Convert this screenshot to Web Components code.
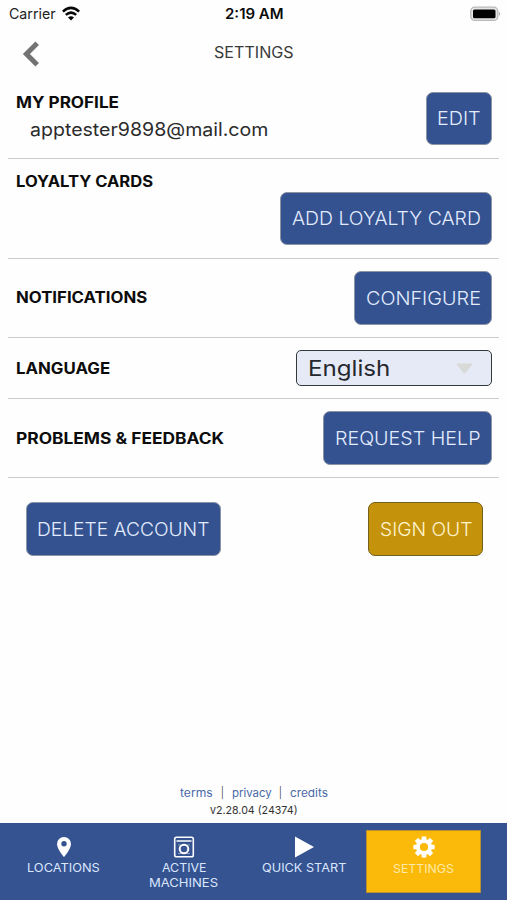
<!DOCTYPE html>
<html lang="en">
<head>
<meta charset="utf-8">
<title>Settings</title>
<style>
  body {
    margin: 0;
    background: #fefefe;
    font-family: Inter, "Open Sans", sans-serif;
    color: #0c0c0c;
  }
</style>
</head>
<body>
<settings-app></settings-app>

<script>
// Label whose glyphs are stretched to fill a given width
class FitText extends HTMLElement {
  constructor() {
    super();
    this.attachShadow({ mode: 'open' });
  }

  connectedCallback() {
    this.shadowRoot.innerHTML = `
      <style>
        :host { display: block; flex: none; text-align: left; white-space: nowrap; width: ${this.getAttribute('w')}px; }
        span { display: inline-block; transform-origin: 0 50%; }
      </style>
      <span><slot></slot></span>
    `;
    const span = this.shadowRoot.querySelector('span');
    const scale = Number(this.getAttribute('w')) / span.offsetWidth;
    span.style.transform = `scaleX(${scale})`;
  }
}
customElements.define('fit-text', FitText);

class StatusBar extends HTMLElement {
  constructor() {
    super();
    this.attachShadow({ mode: 'open' });
    this.shadowRoot.innerHTML = `
      <style>
        :host { display: grid; grid-template-columns: 1fr auto 1fr; align-items: center; height: 28px; padding: 0 6px 0 9px; box-sizing: border-box; font-size: 14.5px; line-height: 20px; }
        .left { display: flex; align-items: center; gap: 6px; color: #222; }
        .time { font-weight: 600; margin-right: 2px; }
        svg { display: block; }
        .left svg { margin-top: -2px; }
        .battery { justify-self: end; margin-top: -1px; }
      </style>
      <div class="left">
        <fit-text w="47">Carrier</fit-text>
        <svg width="18" height="15" viewBox="0 0 18 15" fill="none" stroke="#080808" stroke-width="2.6">
          <path d="M.9 5.6Q9-1.8 17.1 5.6M3.8 8.9Q9 4.3 14.2 8.9"/>
          <path d="M6 11.4Q9 9 12 11.4L9 14.4Z" fill="#080808" stroke="none"/>
        </svg>
      </div>
      <fit-text class="time" w="59">2:19 AM</fit-text>
      <svg class="battery" width="31" height="16" viewBox="0 0 31 16">
        <rect x=".8" y="1.2" width="27" height="13.2" rx="4" fill="#e6e6e6" stroke="#b8b8b8" stroke-width="1.3"/>
        <rect x="3" y="3.4" width="22.5" height="8.9" rx="1.5" fill="#000"/>
        <path d="M29 5.7Q31.3 7.8 29 10Z" fill="#aaa"/>
      </svg>
    `;
  }
}
customElements.define('status-bar', StatusBar);

class TitleBar extends HTMLElement {
  constructor() {
    super();
    this.attachShadow({ mode: 'open' });
    this.shadowRoot.innerHTML = `
      <style>
        :host { display: grid; grid-template-columns: 1fr auto 1fr; align-items: center; height: 51px; padding: 0 22px; box-sizing: border-box; color: #3a3a3a; font-size: 15.5px; line-height: 20px; }
        svg { display: block; }
        fit-text { margin-bottom: 1px; }
      </style>
      <svg width="20" height="28" viewBox="0 0 20 28" fill="none" stroke="#737373" stroke-width="5">
        <path d="M15.2 3.2L4.4 14L15.2 24.8"/>
      </svg>
      <fit-text w="80"><slot></slot></fit-text>
    `;
  }
}
customElements.define('title-bar', TitleBar);

class AppButton extends HTMLElement {
  constructor() {
    super();
    this.attachShadow({ mode: 'open' });
  }

  connectedCallback() {
    this.shadowRoot.innerHTML = `
      <style>
        :host { display: block; flex: none; }
        button {
          display: flex; align-items: center; height: 53.5px; padding: 0 10.5px; box-sizing: border-box;
          border: 1px solid #8b93a5; border-radius: 7px; background: #34528f; color: #e3ecff;
          font: 300 18.6px/24px Inter, "Open Sans", sans-serif;
        }
        :host([gold]) button { background: #c5930b; border-color: #72601f; color: #fff4d0; }
      </style>
      <button><fit-text w="${this.getAttribute('w')}"><slot></slot></fit-text></button>
    `;
  }
}
customElements.define('app-button', AppButton);

class AppSelect extends HTMLElement {
  constructor() {
    super();
    this.attachShadow({ mode: 'open' });
    this.shadowRoot.innerHTML = `
      <style>
        :host { display: flex; align-items: center; justify-content: space-between; width: 196px; height: 36px; padding: 0 18px 0 11px; box-sizing: border-box; border: 1.5px solid #34373c; border-radius: 5px; background: #e6eaf6; color: #25282e; font-size: 21.5px; line-height: 28px; }
        svg { display: block; }
      </style>
      <fit-text w="82"><slot></slot></fit-text>
      <svg width="17" height="11" viewBox="0 0 17 11"><path d="M1 .5H16V2L9.8 9.5Q8.5 11 7.2 9.5L1 2Z" fill="#d8dad8"/></svg>
    `;
  }
}
customElements.define('app-select', AppSelect);

// One line of the settings list: heading on the left, control on the right
class SettingRow extends HTMLElement {
  constructor() {
    super();
    this.attachShadow({ mode: 'open' });
  }

  connectedCallback() {
    this.shadowRoot.innerHTML = `
      <style>
        :host { display: flex; align-items: center; justify-content: space-between; height: ${this.getAttribute('h')}px; margin: 0 8px; padding: 0 7px 0 7.5px; box-sizing: border-box; border-bottom: 1.5px solid #cbcbcb; }
        :host([stacked]) { flex-direction: column; align-items: stretch; justify-content: flex-start; padding-top: 12px; }
        .heading { font-size: 15.3px; font-weight: 700; line-height: 22px; padding-top: 1px; }
        :host([stacked]) .heading { height: 21px; padding-top: 0; }
        .control { display: flex; justify-content: flex-end; }
      </style>
      <div>
        <fit-text class="heading" w="${this.getAttribute('w')}">${this.getAttribute('heading')}</fit-text>
        <slot name="detail"></slot>
      </div>
      <div class="control"><slot></slot></div>
    `;
  }
}
customElements.define('setting-row', SettingRow);

class NavItem extends HTMLElement {
  constructor() {
    super();
    this.attachShadow({ mode: 'open' });
    this.shadowRoot.innerHTML = `
      <style>
        :host { display: flex; flex-direction: column; align-items: center; height: 63px; padding-top: 4px; box-sizing: border-box; border: 1px solid transparent; font-size: 12.1px; line-height: 14.5px; color: #dbe6ff; }
        :host([active]) { background: #fbb90a; border: 1.5px solid #b89030; color: #ffe9a8; }
        .icon { display: flex; align-items: center; justify-content: center; height: 24px; margin-bottom: 2px; }
        :host([active]) .icon { margin-bottom: 3px; }
      </style>
      <div class="icon"><slot name="icon"></slot></div>
      <slot></slot>
    `;
  }
}
customElements.define('nav-item', NavItem);

class NavBar extends HTMLElement {
  constructor() {
    super();
    this.attachShadow({ mode: 'open' });
    this.shadowRoot.innerHTML = `
      <style>
        :host { display: grid; grid-template-columns: repeat(4, 115px); column-gap: 5px; height: 77px; padding: 7px 0 0 6.4px; box-sizing: border-box; background: #355390; }
        svg { display: block; }
      </style>
      <nav-item>
        <svg slot="icon" width="16" height="22" viewBox="0 0 16 22"><path fill="#fff" fill-rule="evenodd" d="M8 1A7 7 0 0 0 1 8C1 13 8 21 8 21S15 13 15 8A7 7 0 0 0 8 1ZM8 5A2.7 2.7 0 1 1 8 10.4A2.7 2.7 0 0 1 8 5Z"/></svg>
        <fit-text w="73">LOCATIONS</fit-text>
      </nav-item>
      <nav-item>
        <svg slot="icon" width="22" height="24" viewBox="0 0 22 24" fill="none" stroke="#fff">
          <rect x="1.7" y="2.2" width="18.6" height="19.6" rx="1.8" stroke-width="1.6"/>
          <path d="M3.5 6H18.5" stroke-width="1.5"/>
          <circle cx="11" cy="14" r="4.3" stroke-width="2"/>
          <path d="M5 10H8M14 10H17M5 18.5H8M14 18.5H17" stroke-width="1" opacity=".45"/>
        </svg>
        <fit-text w="44">ACTIVE</fit-text>
        <fit-text w="69">MACHINES</fit-text>
      </nav-item>
      <nav-item>
        <svg slot="icon" width="20" height="22" viewBox="0 0 20 22"><path d="M1 .5L20 11L1 21.5Z" fill="#fff"/></svg>
        <fit-text w="84">QUICK START</fit-text>
      </nav-item>
      <nav-item active>
        <svg slot="icon" width="22" height="22" viewBox="-11 -11 22 22">
          <g fill="none" stroke="#fff">
            <circle r="6.1" stroke-width="4"/>
            <path stroke-width="4.6" d="M0-7V-10.6M0 7V10.6M-7 0H-10.6M7 0H10.6M-5-5L-7.6-7.6M5-5L7.6-7.6M-5 5L-7.6 7.6M5 5L7.6 7.6"/>
          </g>
        </svg>
        <fit-text w="61">SETTINGS</fit-text>
      </nav-item>
    `;
  }
}
customElements.define('nav-bar', NavBar);

class SettingsApp extends HTMLElement {
  constructor() {
    super();
    this.attachShadow({ mode: 'open' });
    this.shadowRoot.innerHTML = `
      <style>
        :host { display: flex; flex-direction: column; width: 507px; height: 900px; overflow: hidden; }
        .email { margin: 3px 0 4px 14.5px; font-size: 18.3px; line-height: 24px; color: #2b2b2b; }
        .actions { display: flex; justify-content: space-between; padding: 24px 24px 0 25.5px; }
        footer { margin-top: auto; padding-bottom: 4.5px; font-size: 11px; line-height: 17px; color: #333; }
        .links { display: flex; justify-content: center; gap: 8px; }
        .links .link { color: #4a68a8; }
        .version { margin: 0 auto; }
      </style>
      <status-bar></status-bar>
      <title-bar>SETTINGS</title-bar>
      <setting-row heading="MY PROFILE" w="103" h="79.5">
        <fit-text slot="detail" class="email" w="238.5">apptester9898@mail.com</fit-text>
        <app-button w="43.5">EDIT</app-button>
      </setting-row>
      <setting-row stacked heading="LOYALTY CARDS" w="137.5" h="100">
        <app-button w="189">ADD LOYALTY CARD</app-button>
      </setting-row>
      <setting-row heading="NOTIFICATIONS" w="131.5" h="79.5">
        <app-button w="115">CONFIGURE</app-button>
      </setting-row>
      <setting-row heading="LANGUAGE" w="94.5" h="61">
        <app-select>English</app-select>
      </setting-row>
      <setting-row heading="PROBLEMS &amp; FEEDBACK" w="207.5" h="79">
        <app-button w="146">REQUEST HELP</app-button>
      </setting-row>
      <div class="actions">
        <app-button w="172.5">DELETE ACCOUNT</app-button>
        <app-button gold w="92">SIGN OUT</app-button>
      </div>
      <footer>
        <div class="links">
          <fit-text class="link" w="33">terms</fit-text>
          <fit-text w="3">|</fit-text>
          <fit-text class="link" w="39.5">privacy</fit-text>
          <fit-text w="3">|</fit-text>
          <fit-text class="link" w="37.5">credits</fit-text>
        </div>
        <fit-text class="version" w="88">v2.28.04 (24374)</fit-text>
      </footer>
      <nav-bar></nav-bar>
    `;
  }
}
customElements.define('settings-app', SettingsApp);
</script>
</body>
</html>
